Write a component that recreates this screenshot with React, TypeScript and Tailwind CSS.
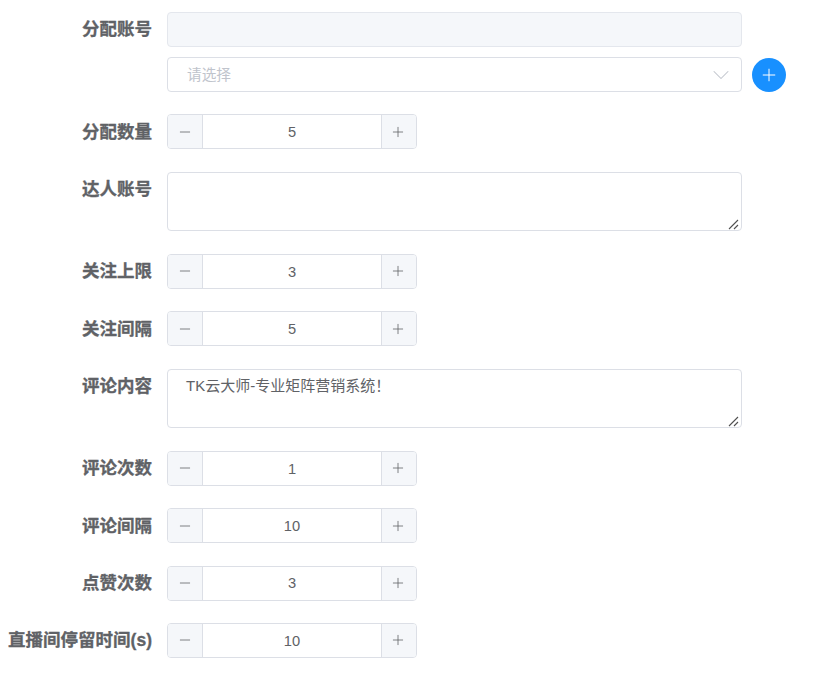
import { ChevronDown, Minus, Plus } from "lucide-react";

const fontStack = "font-['Liberation_Sans','Noto_Sans_CJK_SC',sans-serif]";

function FormRow({ label, children }: { label: string; children: React.ReactNode }) {
  return (
    <div className="flex items-start">
      <label className="w-[152px] shrink-0 whitespace-nowrap pt-[0.4px] text-right text-[17.5px] leading-[34px] font-bold text-[#606266] [-webkit-text-stroke:0.3px_#606266]">
        {label}
      </label>
      <div className="ml-[15px] min-w-0">{children}</div>
    </div>
  );
}

function NumberInput({ value }: { value: number }) {
  return (
    <div className="flex h-[35px] w-[250px] overflow-hidden rounded-[4px] border border-[#dcdfe6] bg-white text-[#606266]">
      <span className="flex w-[35px] shrink-0 items-center justify-center border-r border-[#dcdfe6] bg-[#f5f7fa]">
        <Minus size={16} strokeWidth={1.2} />
      </span>
      <span className="flex flex-1 items-center justify-center pt-[0.5px] text-[14.67px]">{value}</span>
      <span className="flex w-[35px] shrink-0 items-center justify-center border-l border-[#dcdfe6] bg-[#f5f7fa] pr-[2px]">
        <Plus size={16} strokeWidth={1.2} />
      </span>
    </div>
  );
}

function TextArea({ value }: { value?: string }) {
  return (
    <div className="relative h-[60px] w-[575px]">
      <textarea
        readOnly
        defaultValue={value}
        className="block h-[59px] w-full resize-none rounded-[4px] border border-[#dcdfe6] bg-white px-[18px] py-[5px] text-[15px] leading-[22px] text-[#606266] outline-none"
      />
      {/* resize grip */}
      <svg width="12" height="11" viewBox="0 0 12 11" className="pointer-events-none absolute right-[2px] bottom-[2px] text-[#505050]">
        <path d="M1 10 L10 1 M6 10 L10 6" stroke="currentColor" strokeWidth="1.1" fill="none" />
      </svg>
    </div>
  );
}

export default function App() {
  return (
    <div className={`${fontStack} flex h-[675px] w-[815px] flex-col gap-[22.33px] overflow-hidden bg-white pt-3`}>
      <FormRow label="分配账号">
        <div className="h-[35px] w-[575px] rounded-[4px] border border-[#e4e7ed] bg-[#f5f7fa]" />
        <div className="mt-[10px] flex items-center">
          <div className="flex h-[35px] w-[575px] items-center justify-between rounded-[4px] border border-[#dcdfe6] bg-white pr-[6px] pl-[19px]">
            <span className="text-[14.67px] text-[#c0c4cc]">请选择</span>
            <ChevronDown size={28} strokeWidth={0.9} className="text-[#c0c4cc]" />
          </div>
          <button className="ml-[10px] flex h-[34px] w-[34px] items-center justify-center rounded-full bg-[#1890ff] text-white">
            <Plus size={20} strokeWidth={1.2} />
          </button>
        </div>
      </FormRow>
      <FormRow label="分配数量">
        <NumberInput value={5} />
      </FormRow>
      <FormRow label="达人账号">
        <TextArea />
      </FormRow>
      <FormRow label="关注上限">
        <NumberInput value={3} />
      </FormRow>
      <FormRow label="关注间隔">
        <NumberInput value={5} />
      </FormRow>
      <FormRow label="评论内容">
        <TextArea value="TK云大师-专业矩阵营销系统！" />
      </FormRow>
      <FormRow label="评论次数">
        <NumberInput value={1} />
      </FormRow>
      <FormRow label="评论间隔">
        <NumberInput value={10} />
      </FormRow>
      <FormRow label="点赞次数">
        <NumberInput value={3} />
      </FormRow>
      <FormRow label="直播间停留时间(s)">
        <NumberInput value={10} />
      </FormRow>
    </div>
  );
}
